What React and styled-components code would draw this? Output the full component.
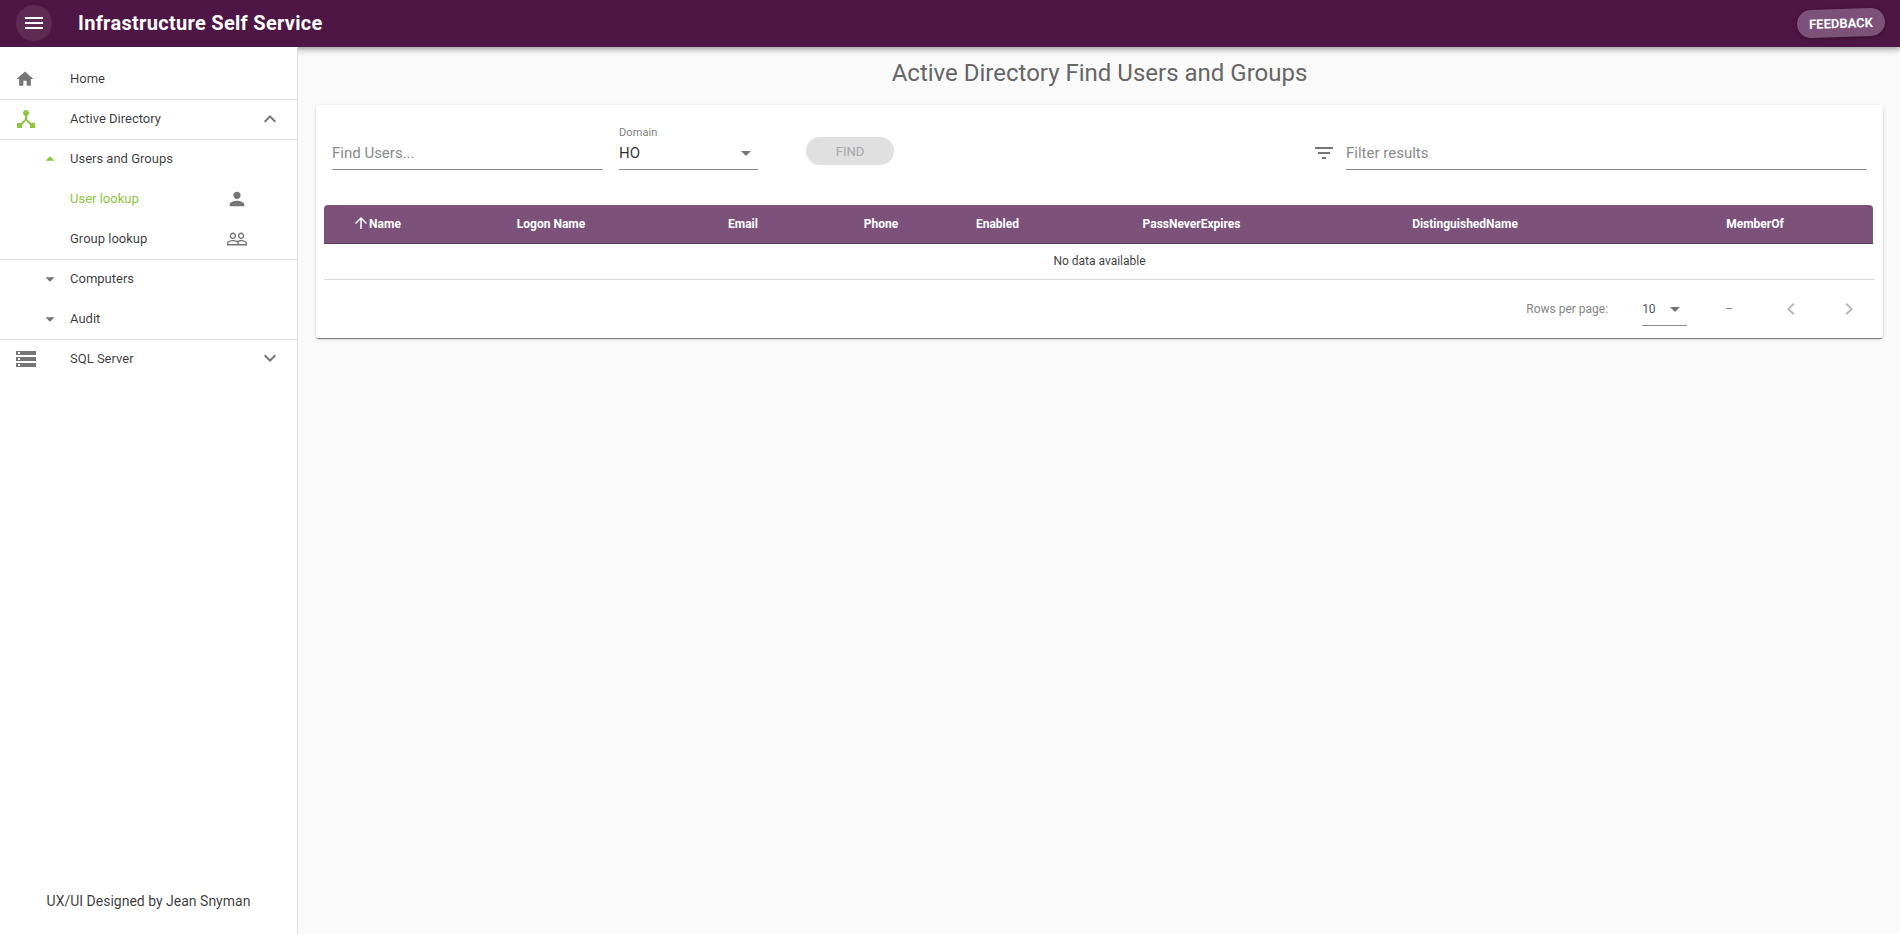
import React from "react";
import styled, { createGlobalStyle } from "styled-components";
import {
  MdMenu, MdHome, MdDeviceHub, MdKeyboardArrowUp, MdKeyboardArrowDown, MdArrowDropUp,
  MdArrowDropDown, MdPerson, MdPeopleOutline, MdStorage, MdFilterList, MdArrowUpward,
  MdChevronLeft, MdChevronRight,
} from "react-icons/md";

const GlobalStyle = createGlobalStyle`
  * { box-sizing: border-box; }
  body {
    margin: 0;
    background: #fafafa;
    color: rgba(0, 0, 0, 0.78);
    font-family: Roboto, sans-serif;
    overflow: hidden;
  }
  svg { display: block; flex: none; }
`;

const Page = styled.div`
  display: flex;
  flex-direction: column;
  height: 100vh;
`;

const Toolbar = styled.header`
  display: flex;
  align-items: center;
  flex: none;
  height: 47px;
  padding: 0 15px 1px 16px;
  background: #4e1644;
  color: #fff;
  z-index: 2;
  box-shadow: 0 2px 4px -1px rgba(0, 0, 0, 0.2), 0 4px 5px 0 rgba(0, 0, 0, 0.14), 0 1px 10px 0 rgba(0, 0, 0, 0.12);
`;

const MenuButton = styled.button`
  display: grid;
  place-items: center;
  width: 36px;
  height: 36px;
  padding: 0;
  border: 0;
  border-radius: 50%;
  color: #fff;
  background: rgba(255, 255, 255, 0.09);
`;

const Brand = styled.h1`
  flex: 1;
  margin: 0 0 0 26px;
  font-size: 20px;
  font-weight: 700;
  line-height: 28px;
  letter-spacing: 0.3px;
`;

const FeedbackButton = styled.button`
  width: 88px;
  height: 28px;
  padding: 0;
  border: 0;
  border-radius: 14px;
  background: #7c527b;
  color: #fff;
  font: 700 13px Roboto, sans-serif;
  transform: rotate(-2deg);
  box-shadow: 0 1px 4px rgba(0, 0, 0, 0.3);
`;

const Body = styled.div`
  display: flex;
  flex: 1;
  min-height: 0;
`;

const Sidebar = styled.aside`
  display: flex;
  flex-direction: column;
  justify-content: space-between;
  flex: none;
  width: 298px;
  padding-top: 12px;
  border-right: 1px solid #dcdcdc;
  background: #fff;
  z-index: 3;
`;

const NavRow = styled.a`
  display: grid;
  grid-template-columns: 70px 1fr auto;
  align-items: center;
  height: 40px;
  padding-right: ${(p) => p.$end || 15}px;
  padding-bottom: 2px;
  border-top: 1px solid ${(p) => (p.$divided ? "#dcdcdc" : "transparent")};
  font-size: 13px;
  color: ${(p) => (p.$active ? "#8dc63f" : "rgba(0, 0, 0, 0.78)")};
`;

const NavIcon = styled.span`
  padding-left: ${(p) => p.$indent}px;
  color: ${(p) => (p.$active ? "#8dc63f" : "#757575")};
`;

const TrailingIcon = styled.span`
  padding-bottom: ${(p) => p.$lift || 0}px;
  color: #757575;
`;

const Credit = styled.p`
  margin: 0;
  padding-bottom: 23px;
  text-align: center;
  font-size: 14px;
  line-height: 20px;
`;

const Main = styled.main`
  flex: 1;
  padding: 12px 17px 0 18px;
`;

const Title = styled.h2`
  margin: 0 0 18px;
  text-align: center;
  font-size: 24px;
  font-weight: 400;
  line-height: 28px;
  color: #666;
`;

const Card = styled.section`
  height: 233px;
  padding: 0 8px;
  border-radius: 2px;
  background: #fff;
  box-shadow: 0 3px 1px -2px rgba(0, 0, 0, 0.2), 0 1px 1px 0 rgba(0, 0, 0, 0.3), 0 1px 4px 0 rgba(0, 0, 0, 0.12);
`;

const Filters = styled.div`
  display: flex;
  align-items: flex-end;
  height: 65px;
  margin: 0 8px;
`;

const Field = styled.div`
  display: flex;
  flex-direction: column;
  width: ${(p) => p.$width}px;
  margin-left: ${(p) => p.$gap || 0}px;
  border-bottom: 1px solid #8c8c8c;
`;

const FieldLabel = styled.label`
  margin-bottom: -3px;
  font-size: 11px;
  line-height: 14px;
  letter-spacing: 0.1px;
  color: #808080;
`;

const FieldValue = styled.div`
  display: flex;
  align-items: center;
  justify-content: space-between;
  height: 32px;
  font-size: 15px;
  color: ${(p) => (p.$filled ? "rgba(0,0,0,.82)" : "#8a8a8a")};
  svg { color: #757575; }
`;

const FindButton = styled.button`
  width: 88px;
  height: 28px;
  margin: 0 auto 5px 48px;
  padding: 0;
  border: 0;
  border-radius: 14px;
  background: #e0e0e0;
  color: #a6a6a6;
  font: 400 13px Roboto, sans-serif;
`;

const FilterIcon = styled.span`
  padding-bottom: 5px;
  color: #757575;
`;

const TableHead = styled.div`
  display: grid;
  grid-template-columns: 108px 238px 146px 130px 103px 285px 262px 1fr;
  align-items: center;
  height: 39px;
  margin: 35px 2px 0 0;
  border-bottom: 1px solid #5b3c5a;
  border-radius: 4px 4px 0 0;
  background: #7c527b;
  color: #fff;
`;

const HeadCell = styled.div`
  display: flex;
  align-items: center;
  justify-content: center;
  padding-left: ${(p) => p.$shift || 0}px;
  padding-right: ${(p) => (p.$sorted ? 3 : 0)}px;
  font-size: 12px;
  font-weight: 700;
  svg { margin: 0 -1px 2px 0; }
`;

const EmptyRow = styled.div`
  height: 36px;
  border-bottom: 1px solid #dcdcdc;
  text-align: center;
  font-size: 12px;
  line-height: 34px;
`;

const Pager = styled.div`
  display: flex;
  align-items: center;
  justify-content: flex-end;
  height: 58px;
  padding-right: 14px;
  font-size: 12px;
  color: #858585;
`;

const RowsSelect = styled.div`
  display: flex;
  align-items: center;
  justify-content: space-between;
  width: 45px;
  height: 33px;
  margin: 0 38px 0 34px;
  border-bottom: 1px solid #8c8c8c;
  color: #555;
  svg { color: #757575; }
`;

const PageButton = styled.button`
  display: grid;
  margin-left: ${(p) => p.$gap}px;
  padding: 0;
  border: 0;
  background: none;
  color: #b8b8b8;
`;

const columns = [
  { label: "Name", sorted: true },
  { label: "Logon Name" },
  { label: "Email" },
  { label: "Phone" },
  { label: "Enabled" },
  { label: "PassNeverExpires" },
  { label: "DistinguishedName" },
  { label: "MemberOf", shift: 41 },
];

const navigation = [
  { label: "Home", icon: MdHome, size: 20, indent: 15 },
  { label: "Active Directory", icon: MdDeviceHub, size: 24, indent: 14, divided: true, lit: true, trailing: MdKeyboardArrowUp },
  { label: "Users and Groups", icon: MdArrowDropUp, size: 22, indent: 39, divided: true, lit: true },
  { label: "User lookup", active: true, trailing: MdPerson, trailingSize: 22, end: 49 },
  { label: "Group lookup", trailing: MdPeopleOutline, trailingSize: 22, end: 49 },
  { label: "Computers", icon: MdArrowDropDown, size: 22, indent: 39, divided: true },
  { label: "Audit", icon: MdArrowDropDown, size: 22, indent: 39 },
  { label: "SQL Server", icon: MdStorage, size: 24, indent: 14, divided: true, trailing: MdKeyboardArrowDown, lift: 2 },
];

function NavItem({ item }) {
  const Icon = item.icon;
  const Trailing = item.trailing;
  return (
    <NavRow $divided={item.divided} $active={item.active} $end={item.end}>
      <NavIcon $indent={item.indent || 0} $active={item.lit}>{Icon && <Icon size={item.size} />}</NavIcon>
      <span>{item.label}</span>
      <TrailingIcon $lift={item.lift}>{Trailing && <Trailing size={item.trailingSize || 24} />}</TrailingIcon>
    </NavRow>
  );
}

export default function App() {
  return (
    <Page>
      <GlobalStyle />
      <Toolbar>
        <MenuButton aria-label="Menu"><MdMenu size={24} /></MenuButton>
        <Brand>Infrastructure Self Service</Brand>
        <FeedbackButton>FEEDBACK</FeedbackButton>
      </Toolbar>
      <Body>
        <Sidebar>
          <nav>{navigation.map((item) => <NavItem key={item.label} item={item} />)}</nav>
          <Credit>UX/UI Designed by Jean Snyman</Credit>
        </Sidebar>
        <Main>
          <Title>Active Directory Find Users and Groups</Title>
          <Card>
            <Filters>
              <Field $width={271}><FieldValue>Find Users...</FieldValue></Field>
              <Field $width={139} $gap={16}>
                <FieldLabel>Domain</FieldLabel>
                <FieldValue $filled>HO<MdArrowDropDown size={24} /></FieldValue>
              </Field>
              <FindButton disabled>FIND</FindButton>
              <FilterIcon><MdFilterList size={24} /></FilterIcon>
              <Field $width={521} $gap={10}><FieldValue>Filter results</FieldValue></Field>
            </Filters>
            <TableHead>
              {columns.map((c) => (
                <HeadCell key={c.label} $shift={c.shift} $sorted={c.sorted}>
                  {c.sorted && <MdArrowUpward size={18} />}{c.label}
                </HeadCell>
              ))}
            </TableHead>
            <EmptyRow>No data available</EmptyRow>
            <Pager>
              <span>Rows per page:</span>
              <RowsSelect>10<MdArrowDropDown size={24} /></RowsSelect>
              <span>–</span>
              <PageButton $gap={46} aria-label="Previous page"><MdChevronLeft size={24} /></PageButton>
              <PageButton $gap={34} aria-label="Next page"><MdChevronRight size={24} /></PageButton>
            </Pager>
          </Card>
        </Main>
      </Body>
    </Page>
  );
}
